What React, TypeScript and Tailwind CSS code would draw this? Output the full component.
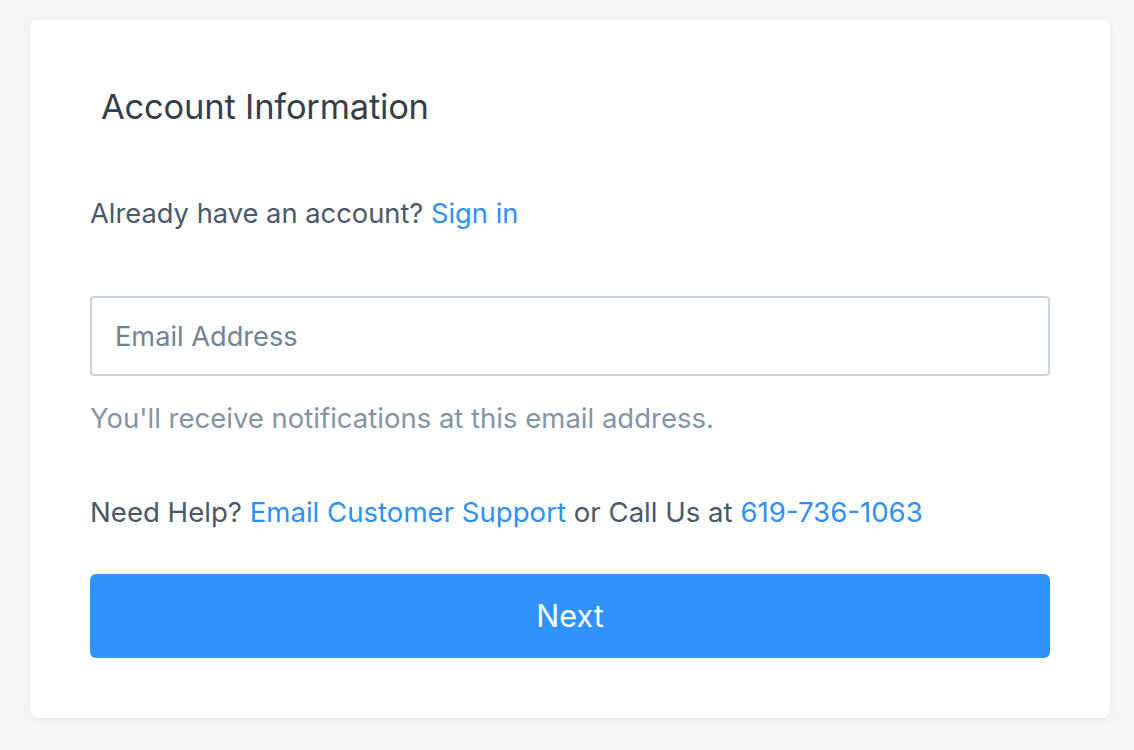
import React from "react";

export default function App() {
  return (
    <div
      className="min-h-[750px] w-full bg-[#f5f6f8] pt-[20px] pl-[30px] pr-[24px]"
      style={{ fontFamily: "Inter, 'Noto Sans', sans-serif" }}
    >
      <div className="rounded-[8px] bg-white px-[60px] pt-[67px] pb-[60px] shadow-[0_2px_10px_rgba(30,40,60,0.06)]">
        <h1 className="ml-[11px] h-[40px] leading-[40px] text-[34.5px] text-[#343f4a] font-normal tracking-[-0.2px]">
          Account Information
        </h1>
        <p className="mt-[67px] h-[40px] leading-[40px] text-[27.3px] text-[#4b5867]">
          Already have an account? <a className="text-[#2f8ff8]">Sign in</a>
        </p>
        <input
          type="text"
          placeholder="Email Address"
          className="mt-[62px] block h-[80px] w-full rounded-[4px] border-2 border-[#c9d1da] px-[23px] text-[27.2px] text-[#4b5867] placeholder:text-[#718395] outline-none"
        />
        <p className="mt-[22px] h-[40px] leading-[40px] text-[27.5px] text-[#8494a4]">
          You'll receive notifications at this email address.
        </p>
        <p className="mt-[54px] h-[40px] leading-[40px] text-[27.6px] text-[#4b5867]">
          Need Help? <a className="text-[#2f8ff8]">Email Customer Support</a> or Call Us at{" "}
          <a className="text-[#2f8ff8]">619-736-1063</a>
        </p>
        <button className="mt-[42px] flex h-[84px] w-full items-center justify-center rounded-[6px] bg-[#3092fb] text-[30.5px] text-white">
          Next
        </button>
      </div>
    </div>
  );
}
